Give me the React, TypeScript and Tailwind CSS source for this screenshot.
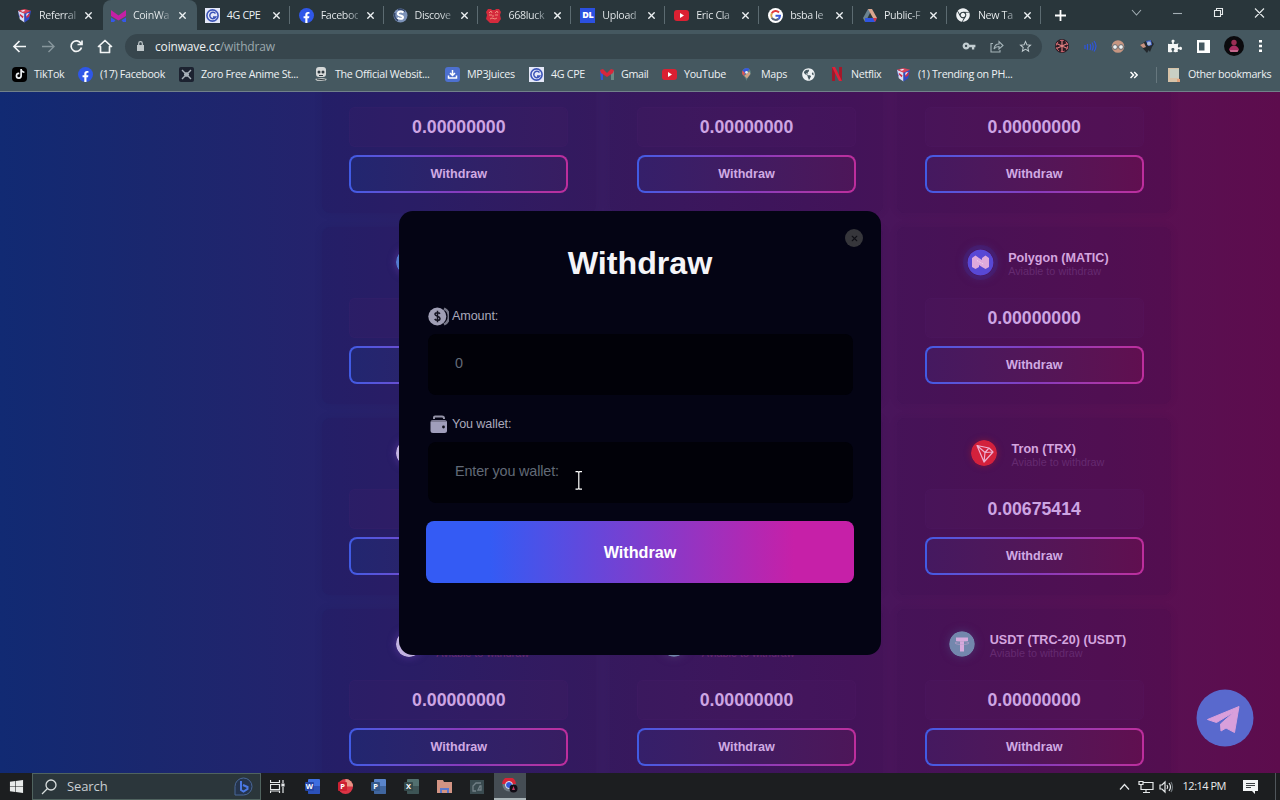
import React from 'react';
import {
  FaChrome,
  FaFacebookF,
  FaGlobeAmericas,
  FaPuzzlePiece,
  FaTiktok,
  FaWindows,
} from 'react-icons/fa';
import { MdOutlineStarBorder, MdVpnKey } from 'react-icons/md';
import { X } from 'lucide-react';

const Cube = () => (
  <svg width="15" height="15" viewBox="0 0 16 16">
    <path d="M1 3l7 2.500v10L3 12z" fill="#d8dcf5" />
    <path d="M15 3L8 5.500v10l5-3.500z" fill="#2f49c8" />
    <path d="M1 3l7-2 7 2-7 3z" fill="#d9415a" />
    <path d="M3 6l4 3-1 2-3-3zM10 8l4-3-1 4-3 2z" fill="#cf3048" />
    <path d="M1 3l2 7-1-1z" fill="#2f49c8" />
    <path d="M4 3l3-1 2 1-3 1zM10 6l3-1-3 4z" fill="#eef0ff" />
  </svg>
);

const Wave = () => (
  <svg width="15" height="13" viewBox="0 0 15 13">
    <path d="M0 1l7.500 5.500L15 1v6L7.500 11.500 0 7z" fill="#c41fa5" />
    <path d="M0 8.500l4.500 2.700L3 13H0zM15 8.500l-4.500 2.700L12 13h3z" fill="#3558e8" />
  </svg>
);

const Cpe = () => (
  <svg width="15" height="15" viewBox="0 0 15 15">
    <path d="M0 0h15v15H0z" fill="#e4e8f8" />
    <circle cx="7.500" cy="7.500" r="5.600" fill="none" stroke="#3d55b8" strokeWidth="1.600" />
    <path d="M10.500 5.500a3.200 3.200 0 1 0 .3 3.500H8" fill="none" stroke="#3d55b8" strokeWidth="1.500" />
  </svg>
);

const FacebookIcon = () => (
  <span className="flex h-[15px] w-[15px] items-end justify-center rounded-full bg-[#2f57e8] text-white">
    <FaFacebookF size={11} />
  </span>
);

const Discover = () => (
  <svg width="15" height="15" viewBox="0 0 15 15">
    <circle cx="7.500" cy="7.500" r="7" fill="#7c92b8" />
    <path d="M2 5a6 6 0 0 0 3 7.500M5 1.500a7 7 0 0 1 7 2" fill="none" stroke="#34466b" strokeWidth="1.500" />
    <path d="M10.500 4.500C8 2.500 4 4 5 6.300c.6 1.400 5 1 5 2.900 0 2-3.500 2.200-5.500.5" fill="none" stroke="#fff" strokeWidth="2" />
  </svg>
);

const Lucky = () => (
  <svg width="15" height="15" viewBox="0 0 15 15">
    <path d="M2 1h3l1 1h3l1-1h3l2 3-1 3 1 4-3 4H4l-4-4 1-4-1-3z" fill="#d42a3c" />
    <path d="M3 5l2-2 1 2M9 5l2-2 1 2M3 7h3M9 7h3M7 7v2M4 11l2-1 3 1 2-1" fill="none" stroke="#f08a7a" />
  </svg>
);

const Upload = () => (
  <span className="flex h-[15px] w-[15px] items-center justify-center bg-[#2b50e0] text-[9px] font-black tracking-tighter text-white">
    DL
  </span>
);

const YouTube = () => (
  <svg width="15" height="11" viewBox="0 0 15 11">
    <rect width="15" height="11" rx="3" fill="#db2032" />
    <path d="M6 3l4 2.500L6 8z" fill="#fff" />
  </svg>
);

const Google = () => (
  <svg width="15" height="15" viewBox="0 0 15 15">
    <circle cx="7.500" cy="7.500" r="7.500" fill="#fff" />
    <g fill="none" strokeWidth="2">
      <path d="M11 4.500A4.500 4.500 0 0 0 3.800 5.300" stroke="#e23b3b" />
      <path d="M3.800 5.300a4.500 4.500 0 0 0 0 4.400" stroke="#d7a14b" />
      <path d="M3.800 9.700a4.500 4.500 0 0 0 6.700 1.200" stroke="#59657a" />
      <path d="M7.500 7.700H12a4.500 4.500 0 0 1-1.500 3.200" stroke="#3a59d8" />
    </g>
  </svg>
);

const Drive = () => (
  <svg width="14" height="13" viewBox="0 0 14 13">
    <path d="M5 0h4L4.500 9 2 13 0 9z" fill="#6b8390" />
    <path d="M5 0h4l5 9h-4z" fill="#dba58d" />
    <path d="M2 9h12l-2 4H2z" fill="#2f55e0" />
    <path d="M10 9h4l-2 4z" fill="#d63745" />
  </svg>
);

const Zoro = () => (
  <svg width="15" height="15" viewBox="0 0 15 15">
    <rect width="15" height="15" rx="2" fill="#1c2230" />
    <path d="M3 3l3 3h3l3-3M3 12l3-3h3l3 3M5 7.500h5" fill="none" stroke="#a7b0b8" strokeWidth="1.400" />
  </svg>
);

const Skull = () => (
  <svg width="14" height="15" viewBox="0 0 14 15">
    <rect x="2" y="0" width="10" height="10" rx="3" fill="#d5d8d8" />
    <path d="M1 12l4-1h4l4 1-2 2H3z" fill="#b8bebe" />
    <circle cx="5" cy="5" r="1.500" fill="#303a40" />
    <circle cx="9" cy="5" r="1.500" fill="#303a40" />
    <path d="M5 8.500h4M3 12l8 1" stroke="#303a40" />
  </svg>
);

const Mp3 = () => (
  <svg width="15" height="15" viewBox="0 0 15 15">
    <rect width="15" height="15" rx="3" fill="#4d70cf" />
    <path d="M7.500 3v5M5 6l2.500 2.500L10 6M3.500 8.500V11h8V8.500" fill="none" stroke="#fff" strokeWidth="1.500" />
  </svg>
);

const Gmail = () => (
  <svg width="14" height="11" viewBox="0 0 14 11">
    <path d="M0 2h3v9H1z" fill="#3156d6" />
    <path d="M11 2h3v9h-3z" fill="#6a8a84" />
    <path d="M0 1l3-1 4 4 4-4 3 1-1 3-6 4-6-4z" fill="#d8273b" />
  </svg>
);

const Maps = () => (
  <svg width="11" height="13" viewBox="0 0 11 15">
    <path d="M5.500 0a5 5 0 0 1 5 5c0 4-4 5-5 10-1-5-5-6-5-10a5 5 0 0 1 5-5z" fill="#5f8180" />
    <path d="M1 3a5 5 0 0 1 8-1.500L3 8z" fill="#3558df" />
    <path d="M1 3l3 3-2 3C0 7 0 5 1 3z" fill="#dc5550" />
    <path d="M3 9l6-5 1 3-4 5z" fill="#d0a184" />
    <circle cx="5.500" cy="5" r="1.500" fill="#e8eef0" />
  </svg>
);

const Netflix = () => (
  <svg width="10" height="14" viewBox="0 0 10 14">
    <path d="M0 0h3v14H0zM7 0h3v14H7z" fill="#a3182a" />
    <path d="M0 0h3l7 14H7z" fill="#e0203a" />
  </svg>
);

interface Tab {
  title: string;
  icon: React.ReactNode;
  active?: boolean;
}

const tabs: Tab[] = [
  { title: 'Referral', icon: <Cube /> },
  { title: 'CoinWa', icon: <Wave />, active: true },
  { title: '4G CPE', icon: <Cpe /> },
  { title: 'Faceboo', icon: <FacebookIcon /> },
  { title: 'Discove', icon: <Discover /> },
  { title: '668luck', icon: <Lucky /> },
  { title: 'Upload', icon: <Upload /> },
  { title: 'Eric Cla', icon: <YouTube /> },
  { title: 'bsba le', icon: <Google /> },
  { title: 'Public-F', icon: <Drive /> },
  { title: 'New Ta', icon: <FaChrome size={14} /> },
];

const TabStrip: React.FC = () => (
  <div className="flex h-[30px] bg-[#29363b] pl-[9px]">
    {tabs.map((tab, i) => (
      <div
        key={tab.title}
        className={`flex h-[30px] w-[93.900px] shrink-0 items-center pl-2 ${
          tab.active ? 'rounded-t-lg bg-[#455860]' : ''
        }`}
      >
        <span className="flex w-[15px] justify-center">{tab.icon}</span>
        <span
          className={`ml-[7px] w-[37px] whitespace-nowrap text-[10.700px] tracking-[-0.350px] ${
            tab.title === '4G CPE'
              ? ''
              : 'bg-linear-to-r from-[#edf1f3] from-70% to-[#6d7a80] bg-clip-text text-transparent'
          }`}
        >
          {tab.title}
        </span>
        <X size={11} strokeWidth={3} className="ml-[7px] shrink-0" />
        {i > 1 && <span className="ml-[7px] h-[18px] w-px bg-[#5c6b71]" />}
      </div>
    ))}
    <svg className="ml-[13px] mt-[10px]" width="11" height="11" viewBox="0 0 11 11" stroke="#fff" strokeWidth="1.800">
      <path d="M5.500 0v11M0 5.500h11" />
    </svg>
    <svg className="ml-auto" width="150" height="30" viewBox="1130 0 150 30" fill="none" stroke="#e5eaeb" strokeWidth="1.100">
      <path d="M1132 10l4.500 5 4.500-5" stroke="#a3afb4" />
      <path d="M1173 13.500h9" stroke="#a3afb4" />
      <path d="M1214.500 10.500h6v6h-6zM1216.500 10.500v-2h6v6h-2M1255 8.500l9 9M1264 8.500l-9 9" />
    </svg>
  </div>
);

const AddressBar: React.FC = () => (
  <div className="flex h-[32px] items-center bg-[#455860]">
    <svg width="125" height="32" viewBox="0 30 125 32" fill="none" stroke="#f3f5f6" strokeWidth="1.700" className="shrink-0">
      <path d="M26 46.500H14M19.500 41l-5.500 5.500 5.500 5.500" />
      <path d="M42 46.500h12M48.500 41l5.500 5.500-5.500 5.500" stroke="#87969c" strokeWidth="1.400" />
      <path d="M81 43.500a5.300 5.300 0 1 0 .5 4M82 40.500v4h-4.500" />
      <path d="M98.500 46.500l6.500-6 6.500 6h-2v6h-9v-6z" strokeLinejoin="round" />
    </svg>
    <div className="flex h-[25px] w-[917px] shrink-0 items-center rounded-full bg-[#37464d]">
      <svg width="7" height="10" viewBox="0 0 7 10" className="ml-3 mr-[11px]">
        <path d="M0 4h7v6H0z" fill="#bfc7ca" />
        <path d="M1.700 4V2.500a1.800 1.800 0 0 1 3.600 0V4" fill="none" stroke="#bfc7ca" strokeWidth="1.200" />
      </svg>
      <span className="mt-px text-[12px] tracking-[-0.170px] text-[#eef1f2]">
        coinwave.cc<span className="text-[#9ba8ad]">/withdraw</span>
      </span>
      <div className="ml-auto mr-[9px] flex items-center gap-[14px] text-[#c3ced2]">
        <MdVpnKey size={14} />
        <svg width="14" height="13" viewBox="0 0 14 13" fill="none" stroke="#a5b3b8" strokeWidth="1.100">
          <path d="M3 3.500H1V12h9v-2M4 9c.5-3.500 2-5 5-5V1.500L13 5.500 9 9V6.500C7 6.500 5.500 7 4 9z" />
        </svg>
        <MdOutlineStarBorder size={15} />
      </div>
    </div>
    {/* Extensions */}
    <div className="ml-[13px] flex flex-1 items-center justify-between pr-[18px]">
      <svg width="14" height="14" viewBox="0 0 14 14">
        <circle cx="7" cy="7" r="7" fill="#2c1c24" />
        <path d="M7 1v12M1.500 4.500l11 5M1.500 9.500l11-5" stroke="#e07f80" strokeWidth="1.200" />
        <circle cx="7" cy="7" r="5.700" fill="none" stroke="#d86670" strokeDasharray="4 2" />
      </svg>
      <svg width="13" height="13" viewBox="0 0 13 13" fill="none" stroke="#2e55df" strokeWidth="1.200">
        <path d="M1 5v4M3.500 4v6M6 4q1.500 2.500 0 6M8 2.500q2.500 4 0 8M10 1q4 5 0 10.500" />
      </svg>
      <svg width="14" height="13" viewBox="0 0 14 13">
        <circle cx="7" cy="6.500" r="6.300" fill="#c69581" />
        <circle cx="4" cy="7" r="2.400" fill="#eef1f2" stroke="#65666a" />
        <circle cx="10" cy="7" r="2.400" fill="#eef1f2" stroke="#65666a" />
      </svg>
      <svg width="14" height="13" viewBox="0 0 14 13">
        <path d="M0 5l6-4v6l5-1-4 7z" fill="#23282d" />
        <path d="M0 5l4-2 2 4-3 1z" fill="#c99382" />
        <path d="M6 1l5-1 3 4-2 3-2 5-4-5z" fill="#23282d" />
        <path d="M6 1l5-1 1 5-4 1z" fill="#4565cd" />
        <circle cx="9" cy="3.500" r="2" fill="#aab9d6" />
      </svg>
      <FaPuzzlePiece size={14} color="#f5f7f7" />
      <svg width="13" height="13" viewBox="0 0 13 13">
        <path d="M0 0h13v13H0z" fill="#fff" />
        <path d="M2 2.500h5.500v8H2z" fill="#455860" />
      </svg>
      <svg width="20" height="20" viewBox="0 0 20 20">
        <circle cx="10" cy="10" r="10" fill="#0b0a0d" />
        <circle cx="10" cy="6.500" r="2.700" fill="#9a2d54" />
        <path d="M5 14c1-6 9-6 10 0l-2 2H7z" fill="#a82d62" />
        <path d="M6 15h8" stroke="#e6a4b8" />
      </svg>
      <svg width="3" height="12" viewBox="0 0 3 12" fill="#fff">
        <path d="M0 0h3v2.500H0zM0 4.700h3v2.500H0zM0 9.500h3V12H0z" />
      </svg>
    </div>
  </div>
);

const bookmarks = [
  {
    label: 'TikTok',
    width: 'w-[66px]',
    icon: (
      <span className="flex h-[15px] w-[15px] items-center justify-center rounded bg-black">
        <FaTiktok size={10} />
      </span>
    ),
  },
  { label: '(17) Facebook', width: 'w-[101px]', icon: <FacebookIcon /> },
  { label: 'Zoro Free Anime St...', width: 'w-[134px]', icon: <Zoro /> },
  { label: 'The Official Websit...', width: 'w-[132px]', icon: <Skull /> },
  { label: 'MP3Juices', width: 'w-[84px]', icon: <Mp3 /> },
  { label: '4G CPE', width: 'w-[70px]', icon: <Cpe /> },
  { label: 'Gmail', width: 'w-[63px]', icon: <Gmail /> },
  { label: 'YouTube', width: 'w-[77px]', icon: <YouTube /> },
  { label: 'Maps', width: 'w-[62px]', icon: <Maps /> },
  { label: '', width: 'w-[28px]', icon: <FaGlobeAmericas size={13} /> },
  { label: 'Netflix', width: 'w-[67px]', icon: <Netflix /> },
  { label: '(1) Trending on PH...', width: 'w-[150px]', icon: <Cube /> },
];

const BookmarksBar: React.FC = () => (
  <div className="flex h-[30px] items-center border-b border-[#71818a] bg-[#455860] pb-[4px] pl-3 text-[10.700px] tracking-[-0.300px]">
    {bookmarks.map((b) => (
      <div key={b.label} className={`flex shrink-0 items-center gap-[7px] whitespace-nowrap ${b.width}`}>
        <span className="flex w-[15px] shrink-0 justify-center">{b.icon}</span>
        <span>{b.label}</span>
      </div>
    ))}
    <svg className="ml-auto mr-[18px]" width="8" height="8" viewBox="0 0 8 8" fill="none" stroke="#fff" strokeWidth="1.500">
      <path d="M.5 1l3 3-3 3M4.200 1l3 3-3 3" />
    </svg>
    <span className="h-4 w-px shrink-0 bg-[#66777e]" />
    <svg className="ml-[11px] mr-2 shrink-0" width="12" height="14" viewBox="0 0 12 14">
      <path d="M0 0h11v14H0z" fill="#d7c3a8" />
      <path d="M2 1h9v9H2z" fill="#c9d0c4" />
      <path d="M9 11h3v3H9z" fill="#e2a37d" />
    </svg>
    <span className="w-[92px] whitespace-nowrap">Other bookmarks</span>
  </div>
);

const Polygon = () => (
  <svg width="27" height="27" viewBox="0 0 27 27" className="rounded-full shadow-[0_0_0_4px_#40258860,0_0_8px_2px_#48389080]">
    <circle cx="13.500" cy="13.500" r="13" fill="#5848d5" />
    <path d="M5 9l3.500-2.500L12 9l3 2V9l3.500-2.500L22 9v9l-3.500 2-3.500-2-3-2v2l-3.500 2L5 18z" fill="#dfa9dc" />
    <path d="M10 11.500l7 4" stroke="#f4d7ef" strokeDasharray="1 1" />
  </svg>
);

const Tron = () => (
  <svg width="26" height="26" viewBox="0 0 26 26" className="rounded-full shadow-[0_0_6px_#7c163d]">
    <circle cx="13" cy="13" r="13" fill="#d3213c" />
    <path d="M6 5.500l12 2.500 4 4-9 10zM6 5.500l8 7L13 22M14 12.500l8-.5M14 12.500L18 8" fill="none" stroke="#edafd0" strokeWidth="1.200" strokeLinejoin="round" />
  </svg>
);

const Tether = () => (
  <svg width="26" height="26" viewBox="0 0 26 26" className="rounded-full shadow-[0_0_8px_#4b326f]">
    <circle cx="13" cy="13" r="12.800" fill="#7387ad" />
    <path d="M7 6.500h12V10h-4v10.500h-4V10H7z" fill="#d7a9dd" />
    <ellipse cx="13" cy="12" rx="7" ry="1.500" fill="none" stroke="#bea2cd" strokeWidth=".7" />
  </svg>
);

const Dot = ({ color }: { color: string }) => (
  <svg width="26" height="26" viewBox="0 0 27 27" className="rounded-full shadow-[0_0_6px_2px_#53359890]">
    <circle cx="13.500" cy="13.500" r="13.500" fill={color} />
  </svg>
);

interface Coin {
  name?: string;
  amount: string;
  icon?: React.ReactNode;
}

// The header of the first row is scrolled out of view
const coins: Coin[] = [
  { amount: '0.00000000' },
  { amount: '0.00000000' },
  { amount: '0.00000000' },
  { name: 'Dash (DASH)', amount: '0.00000000', icon: <Dot color="#547bd0" /> },
  { name: 'Dogecoin (DOGE)', amount: '0.00000000', icon: <Dot color="#b79b62" /> },
  { name: 'Polygon (MATIC)', amount: '0.00000000', icon: <Polygon /> },
  { name: 'Ripple (XRP)', amount: '0.00000000', icon: <Dot color="#c5b5e3" /> },
  { name: 'Solana (SOL)', amount: '0.00000000', icon: <Dot color="#8c63c7" /> },
  { name: 'Tron (TRX)', amount: '0.00675414', icon: <Tron /> },
  { name: 'Stellar (XLM)', amount: '0.00000000', icon: <Dot color="#c3b3e2" /> },
  { name: 'USDT (ERC-20) (USDT)', amount: '0.00000000', icon: <Tether /> },
  { name: 'USDT (TRC-20) (USDT)', amount: '0.00000000', icon: <Tether /> },
];

const fills = [
  'bg-linear-to-r from-[#222670] to-[#381d62]',
  'bg-linear-to-r from-[#351f6a] to-[#4d1659]',
  'bg-linear-to-r from-[#451960] to-[#600f50]',
];

const CoinCard: React.FC<{ coin: Coin; fill: string }> = ({ coin, fill }) => (
  <div className="h-[177px] rounded-lg bg-[#1d024018] px-[27.300px] pt-[15px] shadow-[0_0_8px_#1d024018]">
    <div className="flex h-[40px] items-center justify-center pl-[7px]">
      {coin.icon}
      {coin.name && (
        <div className="ml-[14.500px] mt-[2px]">
          <h3 className="whitespace-nowrap text-[12.600px] font-bold leading-[16px] text-[#d4a5df]">{coin.name}</h3>
          <p className="text-[10.800px] leading-[11px] text-[#652a70]">Aviable to withdraw</p>
        </div>
      )}
    </div>
    <div className="mt-4 flex h-[40px] items-center justify-center rounded-md border border-[#6030800f] bg-[#5a20701c] text-[17.700px] font-bold text-[#cda5e3]">
      {coin.amount}
    </div>
    <div className={`mt-[8px] h-[38px] rounded-lg bg-linear-to-r from-[#405be4] via-[#863bbd] to-[#bd2d9c] p-[2px]`}>
      <button className={`block h-full w-full rounded-md pt-px text-[12.600px] font-bold text-[#d0aae3] ${fill}`}>
        Withdraw
      </button>
    </div>
  </div>
);

const WithdrawModal: React.FC = () => (
  <div className="absolute left-[399px] top-[119px] h-[444px] w-[482px] rounded-[14px] bg-[#040414] px-[27px] pt-[33px]">
    <span className="absolute right-[18px] top-[18px] flex h-[18px] w-[18px] items-center justify-center rounded-full bg-[#36363b] text-[#101016]">
      <X size={9} strokeWidth={3} />
    </span>
    <h2 className="text-center text-[32.200px] font-bold leading-[38px] text-[#f4f4f8]">Withdraw</h2>

    <label className="ml-[2px] mt-[24px] flex h-[20px] items-center text-[12.600px] tracking-[-0.100px] text-[#aaa9bb]">
      <svg width="21" height="19" viewBox="0 0 21 19" className="mr-[3px]">
        <path d="M16 1.500a9 9 0 0 1 0 16" fill="none" stroke="#777889" strokeWidth="2.500" />
        <circle cx="9.300" cy="9.500" r="9" fill="#a09fb5" />
        <path d="M12 6.700C10.800 5.200 6.800 5.400 7 7.500s5 1.500 5 3.900-4 2.500-5.300.6M9.500 3.800v11.400" fill="none" stroke="#141422" strokeWidth="1.500" />
      </svg>
      <span className="mt-px">Amount:</span>
    </label>
    <input
      className="ml-[2px] mt-[8px] block h-[61px] w-[425px] rounded-lg bg-[#010108] pb-[3px] pl-[27px] text-[14.400px] tracking-[-0.150px] outline-none placeholder:text-[#626a77]"
      placeholder="0"
    />

    <label className="ml-[2px] mt-[19px] flex h-[20px] items-center text-[12.600px] tracking-[-0.100px] text-[#aaa9bb]">
      <svg width="21" height="19" viewBox="0 0 21 19" className="mr-[3px]">
        <path d="M6 4V2.500A1 1 0 0 1 7 1.500h7a2 2 0 0 1 2 2V4" fill="none" stroke="#9594a8" strokeWidth="2" />
        <rect x="2.500" y="5" width="16.500" height="13" rx="2.500" fill="#a09ebb" />
        <path d="M3 6h15" stroke="#5a596c" />
        <circle cx="15.500" cy="12" r="1.400" fill="#11111d" />
      </svg>
      <span className="mt-px">You wallet:</span>
    </label>
    <input
      className="ml-[2px] mt-[8px] block h-[61px] w-[425px] rounded-lg bg-[#010108] pb-[3px] pl-[27px] text-[14.400px] tracking-[-0.150px] outline-none placeholder:text-[#626a77]"
      placeholder="Enter you wallet:"
    />

    <button className="mt-[18px] h-[62px] w-[428px] rounded-lg bg-[linear-gradient(90deg,#345bf4_15%,#c620a8_86%)] text-[16.200px] font-bold text-white">
      Withdraw
    </button>

    {/* Text cursor over the wallet field */}
    <svg className="absolute left-[176px] top-[260px]" width="8" height="19" viewBox="0 0 8 19" fill="none" stroke="#fff" strokeWidth="1.200">
      <path d="M.5.700h2.500l.8.700.800-.700H7M3.800 1.300v16M.5 18.200h2.500l.8-.9.8.9H7" />
    </svg>
  </div>
);

const Page: React.FC = () => (
  <main className="relative h-[681px] overflow-hidden bg-[linear-gradient(90deg,#112a73_0,#1a276e_150px,#26226c_340px,#381c62_600px,#49155b_890px,#591052_1160px,#5d0c4d_1280px)] font-['Liberation_Sans',Arial,sans-serif]">
    <div className="-mt-[56px] ml-[322px] grid w-[849px] grid-cols-3 gap-[14px]">
      {coins.map((coin, i) => (
        <CoinCard key={i} coin={coin} fill={fills[i % 3]} />
      ))}
    </div>
    <WithdrawModal />
    {/* Telegram support bubble */}
    <svg className="absolute left-[1196px] top-[597px]" width="58" height="58" viewBox="0 0 58 58">
      <circle cx="29" cy="29" r="28.500" fill="#5969cd" />
      <path d="M11.500 30.500L43 17.500l-4.500 26-8.500-4.500-5 3-.5-7L38 23 20.500 33.500z" fill="#d99fdb" stroke="#d99fdb" strokeLinejoin="round" />
    </svg>
  </main>
);

const Office = ({ letter, color, light }: { letter: string; color: string; light: string }) => (
  <svg width="15" height="15" viewBox="0 0 15 15">
    <rect x="3" width="12" height="15" rx="1" fill={light} />
    <path d="M3 7h12v8H3z" fill={color} opacity=".7" />
    <rect y="3" width="9" height="9" rx="1" fill={color} />
    <text x="4.500" y="10" fontSize="7.500" fontWeight="700" fill="#fff" textAnchor="middle">
      {letter}
    </text>
  </svg>
);

const Taskbar: React.FC = () => (
  <footer className="flex h-[27px] items-center bg-[#1c1e20] text-[#e8eaea]">
    <span className="flex w-8 justify-center">
      <FaWindows size={15} />
    </span>
    <div className="flex h-full w-[229px] items-center border border-[#50635f] bg-[#2b363b] text-[13px] tracking-[-0.100px] text-[#c9ced2]">
      <svg width="16" height="16" viewBox="0 0 16 16" fill="none" stroke="#d8dddd" strokeWidth="1.300" className="ml-2 mr-[10px]">
        <circle cx="10" cy="6" r="5" />
        <path d="M6.500 9.500L1 15" />
      </svg>
      <span className="mt-px">Search</span>
      <svg width="19" height="19" viewBox="0 0 19 19" className="ml-auto mr-[7px]">
        <path d="M1 18V9.500A8.500 8.500 0 1 1 9.500 18z" fill="#25344d" stroke="#496799" />
        <path d="M7 4v9l2.500 1.500 4-2.500v-2L9 8" fill="none" stroke="#4a78e4" strokeWidth="2" />
      </svg>
    </div>
    <svg width="15" height="13" viewBox="0 0 15 13" fill="none" stroke="#e5e8e9" className="ml-[9px]" strokeWidth="1.200">
      <path d="M.5 0v2.500h9V0M.5 4.500h9v5h-9zM.5 13v-2h9v2M13 0v3M13 7v6" />
      <path d="M12 4h2v2h-2z" fill="#fff" />
    </svg>
    <div className="ml-[20px] flex items-center gap-[18px]">
      <Office letter="W" color="#2445a8" light="#3e6ee0" />
      <svg width="15" height="15" viewBox="0 0 15 15">
        <circle cx="7.500" cy="7.500" r="7.500" fill="#db3445" />
        <path d="M7.500 0A7.500 7.500 0 0 1 15 7.500H7.500z" fill="#e79486" />
        <rect y="3" width="9" height="9" rx="1" fill="#cc2032" />
        <text x="4.500" y="10" fontSize="7.500" fontWeight="700" fill="#fff" textAnchor="middle">P</text>
      </svg>
      <Office letter="P" color="#34588b" light="#5a85cb" />
      <Office letter="X" color="#34494a" light="#52706f" />
      <svg width="15" height="13" viewBox="0 0 15 13">
        <path d="M0 0h6l1 2h8v11H0z" fill="#d39484" />
        <path d="M3 13V8h9v5h-2v-3H5v3z" fill="#5c79cf" />
      </svg>
      <svg width="14" height="14" viewBox="0 0 14 14">
        <path d="M0 0h14v14H0z" fill="#3a4b50" />
        <path d="M11 3H6L3 6v5h3M11 6v4H8l2-4z" fill="none" stroke="#738187" strokeWidth="1.300" />
      </svg>
    </div>
    <span className="ml-[10px] flex h-full w-8 items-center justify-center border-b-2 border-[#aab4b8] bg-[#454d54]">
      <svg width="16" height="15" viewBox="0 0 16 15">
        <circle cx="7" cy="7" r="6.500" fill="#6d7880" />
        <path d="M0 6a7 7 0 0 1 14 0H7z" fill="#d82438" />
        <circle cx="7" cy="7" r="3.500" fill="#3058dc" stroke="#eee" />
        <circle cx="11.500" cy="10.500" r="4" fill="#100b14" />
        <path d="M10 12l1.500-4 1.500 4z" fill="#bd3964" />
      </svg>
    </span>
    <svg className="ml-auto" width="55" height="14" viewBox="0 0 55 14" fill="none" stroke="#e5e8e9" strokeWidth="1.200">
      <path d="M1 9.500l4.500-5 4.500 5M24 2.500h10v7H22v-4M27 9.500V12M24 12.500h7M20 1.500h4v3h-4zM22 4.500V9" />
      <path d="M41 5h2l3-3v10l-3-3h-2z" />
      <path d="M48 5q1.500 2 0 4M50 3q3 4 0 8" />
      <path d="M52 2q3 5 0 10" stroke="#6d7478" />
    </svg>
    <span className="ml-[9px] whitespace-nowrap text-[11px] tracking-[-0.500px]">12:14 PM</span>
    <svg width="15" height="14" viewBox="0 0 15 14" className="ml-[17px]">
      <path d="M0 0h15v11h-3v3l-3-3H0z" fill="#f3f5f6" />
      <path d="M3 3.500h9M3 5.500h9M3 7.500h5" stroke="#3c4145" />
    </svg>
    <span className="ml-[17px] mr-[4px] h-full w-px bg-[#50565b]" />
  </footer>
);

const App: React.FC = () => {
  return (
    <div className="h-[800px] w-[1280px] overflow-hidden bg-[#1c1e20] font-['Open_Sans','Noto_Sans',sans-serif] text-[#edf1f3]">
      <TabStrip />
      <AddressBar />
      <BookmarksBar />
      <Page />
      <Taskbar />
    </div>
  );
};

export default App;
